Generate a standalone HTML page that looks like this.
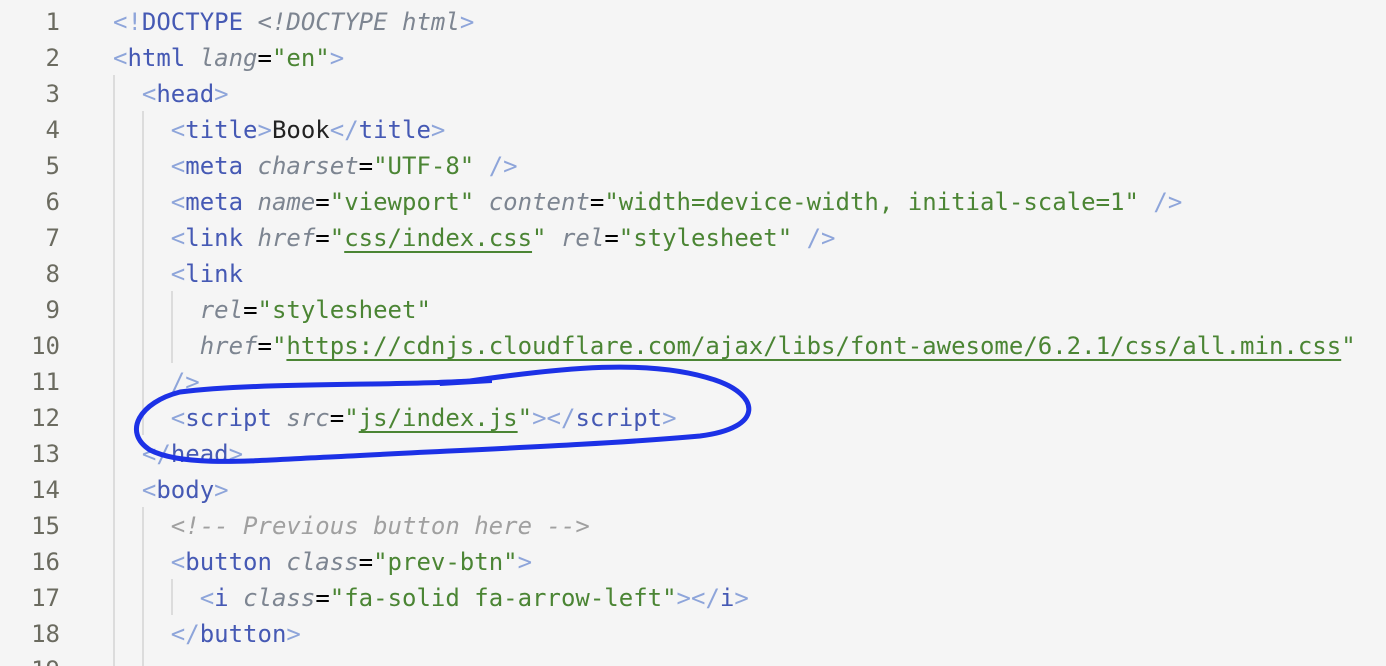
<!DOCTYPE html>
<html><head><style>
html,body{margin:0;padding:0;background:#f5f5f5;width:1386px;height:666px;overflow:hidden}
body{font-family:"DejaVu Sans Mono","Liberation Mono",monospace;font-size:24px;position:relative}
.l{position:absolute;left:0;height:36px;line-height:36px;white-space:pre;width:1386px;margin-top:1px}
.n{position:absolute;width:60px;text-align:right;left:0;color:#6b6b60}
.c{position:absolute;left:113px}
.b{color:#8ea5da}.t{color:#4559b4}.a{color:#7d8591;font-style:italic}.s{color:#4b8534}.u{text-decoration:underline;text-decoration-thickness:2px;text-underline-offset:5px}
.k{color:#222}.cm{color:#a0a0a0;font-style:italic}
.g{position:absolute;width:2px;background:#dcdcdc}
</style></head><body>
<div class="g" style="left:113px;top:75px;height:600px"></div>
<div class="g" style="left:142px;top:111px;height:324px"></div>
<div class="g" style="left:142px;top:507px;height:160px"></div>
<div class="g" style="left:171px;top:291px;height:72px"></div>
<div class="g" style="left:171px;top:579px;height:36px"></div>

<div class="l" style="top:3px"><span class="n">1</span><span class="c"><span class="b">&lt;!</span><span class="t">DOCTYPE</span> <span class="a">&lt;!DOCTYPE html</span><span class="b">&gt;</span></span></div>
<div class="l" style="top:39px"><span class="n">2</span><span class="c"><span class="b">&lt;</span><span class="t">html</span> <span class="a">lang</span>=<span class="s">"en"</span><span class="b">&gt;</span></span></div>
<div class="l" style="top:75px"><span class="n">3</span><span class="c">  <span class="b">&lt;</span><span class="t">head</span><span class="b">&gt;</span></span></div>
<div class="l" style="top:111px"><span class="n">4</span><span class="c">    <span class="b">&lt;</span><span class="t">title</span><span class="b">&gt;</span><span class="k">Book</span><span class="b">&lt;/</span><span class="t">title</span><span class="b">&gt;</span></span></div>
<div class="l" style="top:147px"><span class="n">5</span><span class="c">    <span class="b">&lt;</span><span class="t">meta</span> <span class="a">charset</span>=<span class="s">"UTF-8"</span> <span class="b">/&gt;</span></span></div>
<div class="l" style="top:183px"><span class="n">6</span><span class="c">    <span class="b">&lt;</span><span class="t">meta</span> <span class="a">name</span>=<span class="s">"viewport"</span> <span class="a">content</span>=<span class="s">"width=device-width, initial-scale=1"</span> <span class="b">/&gt;</span></span></div>
<div class="l" style="top:219px"><span class="n">7</span><span class="c">    <span class="b">&lt;</span><span class="t">link</span> <span class="a">href</span>=<span class="s">"<span class="u">css/index.css</span>"</span> <span class="a">rel</span>=<span class="s">"stylesheet"</span> <span class="b">/&gt;</span></span></div>
<div class="l" style="top:255px"><span class="n">8</span><span class="c">    <span class="b">&lt;</span><span class="t">link</span></span></div>
<div class="l" style="top:291px"><span class="n">9</span><span class="c">      <span class="a">rel</span>=<span class="s">"stylesheet"</span></span></div>
<div class="l" style="top:327px"><span class="n">10</span><span class="c">      <span class="a">href</span>=<span class="s">"<span class="u">https://cdnjs.cloudflare.com/ajax/libs/font-awesome/6.2.1/css/all.min.css</span>"</span></span></div>
<div class="l" style="top:363px"><span class="n">11</span><span class="c">    <span class="b">/&gt;</span></span></div>
<div class="l" style="top:399px"><span class="n">12</span><span class="c">    <span class="b">&lt;</span><span class="t">script</span> <span class="a">src</span>=<span class="s">"<span class="u">js/index.js</span>"</span><span class="b">&gt;&lt;/</span><span class="t">script</span><span class="b">&gt;</span></span></div>
<div class="l" style="top:435px"><span class="n">13</span><span class="c">  <span class="b">&lt;/</span><span class="t">head</span><span class="b">&gt;</span></span></div>
<div class="l" style="top:471px"><span class="n">14</span><span class="c">  <span class="b">&lt;</span><span class="t">body</span><span class="b">&gt;</span></span></div>
<div class="l" style="top:507px"><span class="n">15</span><span class="c">    <span class="cm">&lt;!-- Previous button here --&gt;</span></span></div>
<div class="l" style="top:543px"><span class="n">16</span><span class="c">    <span class="b">&lt;</span><span class="t">button</span> <span class="a">class</span>=<span class="s">"prev-btn"</span><span class="b">&gt;</span></span></div>
<div class="l" style="top:579px"><span class="n">17</span><span class="c">      <span class="b">&lt;</span><span class="t">i</span> <span class="a">class</span>=<span class="s">"fa-solid fa-arrow-left"</span><span class="b">&gt;&lt;/</span><span class="t">i</span><span class="b">&gt;</span></span></div>
<div class="l" style="top:615px"><span class="n">18</span><span class="c">    <span class="b">&lt;/</span><span class="t">button</span><span class="b">&gt;</span></span></div>
<div class="l" style="top:651px"><span class="n">19</span><span class="c"></span></div>

<svg width="1386" height="666" style="position:absolute;left:0;top:0" fill="none">
<path d="M180 392 C140 402,122 432,150 450 C185 468,260 460,330 457 C460 450,600 445,700 436 C765 428,760 395,715 380 C650 358,560 368,470 381 C400 386,260 382,180 392 Z" stroke="#1c31e6" stroke-width="5" stroke-linecap="round"/>
<path d="M438 380 L492 378 L492 383 L440 386 Z" fill="#1c31e6"/>
</svg>
</body></html>
